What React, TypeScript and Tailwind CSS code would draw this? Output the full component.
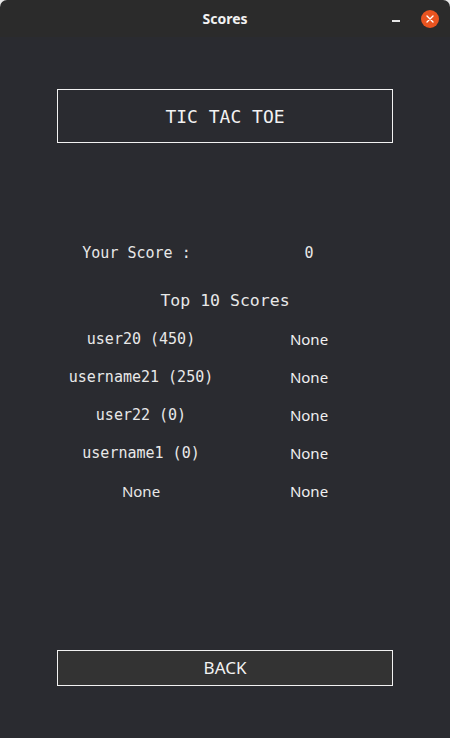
import React from 'react'

const mono = { fontFamily: '"DejaVu Sans Mono", monospace' }
const sans = { fontFamily: '"Noto Sans", "Open Sans", sans-serif' }

const rows: [string, string][] = [
  ['user20 (450)', 'None'],
  ['username21 (250)', 'None'],
  ['user22 (0)', 'None'],
  ['username1 (0)', 'None'],
  ['None', 'None'],
]

export default function App() {
  return (
    <div className="w-[450px] h-[738px] bg-[#e8e8e8] overflow-hidden">
      <div className="w-full h-full flex flex-col rounded-t-[7px] overflow-hidden">
        {/* Title bar */}
        <div className="h-[37px] shrink-0 bg-[#2b2b2b] flex items-center relative">
          <span className="flex-1 text-center text-[14px] font-bold text-[#f2f2f2] pb-[1px]" style={sans}>
            Scores
          </span>
          <span className="absolute left-[392px] top-[20px] w-[8px] h-[1.5px] bg-[#e6e6e6]" />
          <span className="absolute left-[421px] top-[10px] w-[18px] h-[18px] rounded-full bg-[#e95420] flex items-center justify-center">
            <svg width="8" height="8" viewBox="0 0 8 8">
              <path d="M1 1 L7 7 M7 1 L1 7" stroke="#fff" strokeWidth="1.4" strokeLinecap="round" />
            </svg>
          </span>
        </div>

        {/* Body */}
        <div className="flex-1 bg-[#2a2b30] flex flex-col px-[57px] pt-[52px] text-[#e8e8e8]">
          <div className="h-[54px] border border-[#f2f2f2] flex items-center justify-center text-[18px] text-[#f2f2f2]" style={mono}>
            TIC TAC TOE
          </div>

          <div className="grid grid-cols-2 mt-[99px] text-[15px]" style={mono}>
            <span className="text-center whitespace-pre">Your Score : </span>
            <span className="text-center">0</span>
          </div>

          <div className="text-center text-[16.5px] mt-[24px]" style={mono}>
            Top 10 Scores
          </div>

          <div className="flex flex-col gap-[16px] mt-[15px] text-[15px]">
            {rows.map(([name, val], i) => (
              <div key={i} className="grid grid-cols-2 h-[22px] items-center">
                <span className="text-center" style={name === 'None' ? sans : mono}>{name}</span>
                <span className="text-center text-[#f0f0f0]" style={sans}>{val}</span>
              </div>
            ))}
          </div>

          <div className="flex-1" />

          <button className="h-[36px] mb-[52px] border border-[#f2f2f2] bg-[#333333] text-[17px] text-[#f2f2f2]" style={sans}>
            BACK
          </button>
        </div>
      </div>
    </div>
  )
}
